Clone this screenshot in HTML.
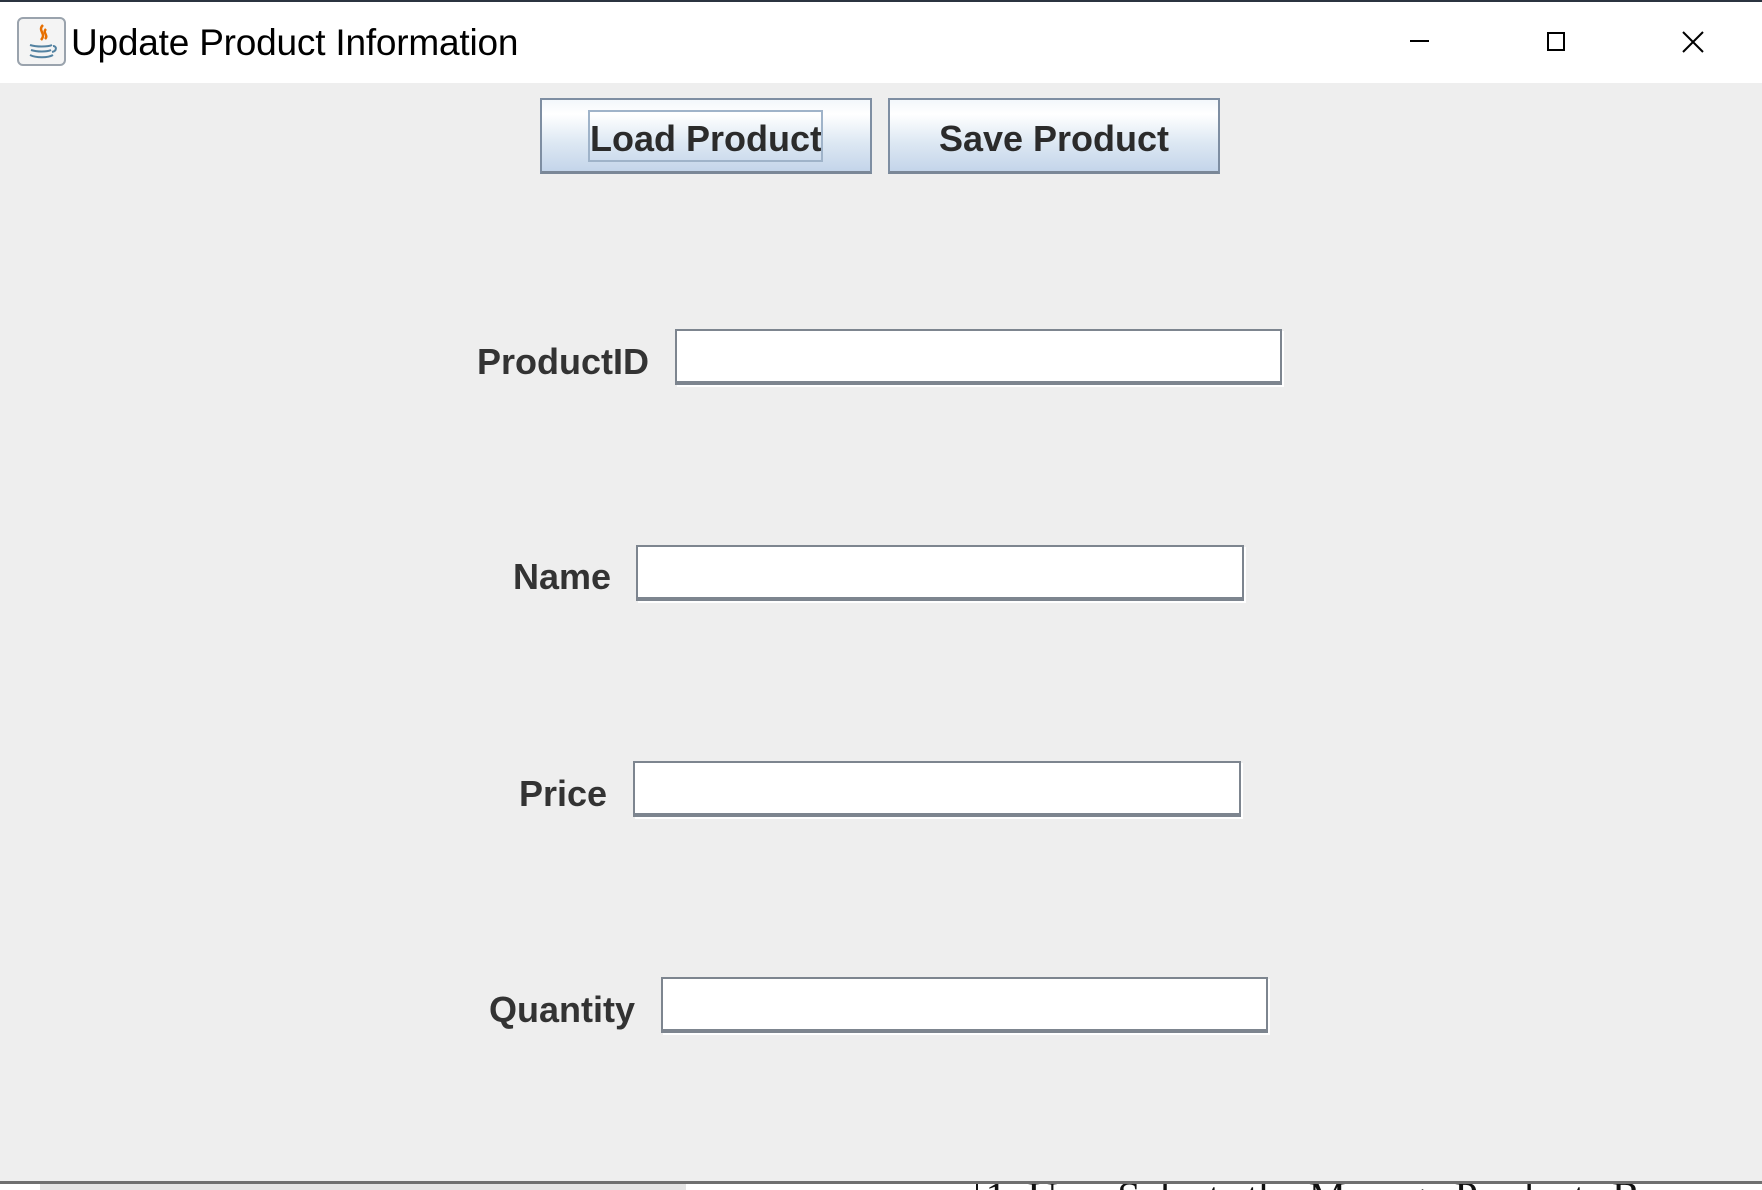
<!DOCTYPE html>
<html><head><meta charset="utf-8"><style>
*{margin:0;padding:0;box-sizing:border-box}
html{width:1762px;height:1190px;overflow:hidden}
body{width:1762px;height:1190px;overflow:hidden;background:#fff;position:relative;font-family:"Liberation Sans",sans-serif}
.top{position:absolute;left:0;top:0;width:1762px;height:2px;background:#2b3440}
.title{position:absolute;left:0;top:2px;width:1762px;height:81px;background:#fff}
.ttext{position:absolute;left:71px;top:20px;font-size:37px;color:#000;letter-spacing:-0.2px;white-space:nowrap}
.content{position:absolute;left:0;top:83px;width:1762px;height:1098px;background:#eeeeee}
.btn{position:absolute;top:98px;width:332px;height:76px;border:2px solid #7e8ea2;border-bottom:3px solid #7a8797;background:linear-gradient(#f3f7fb 0%,#ffffff 20%,#dde8f3 60%,#c4d5ea 100%);font-weight:bold;font-size:36px;color:#2b2b2b;text-align:center;line-height:78px;white-space:nowrap}
.focus{position:absolute;left:588px;top:110px;width:235px;height:52px;border:2px solid #9fb3c9}
.lbl{position:absolute;font-weight:bold;font-size:36px;color:#333;white-space:nowrap;line-height:42px}
.fld{position:absolute;background:#fff;border-top:2px solid #7d858f;border-left:2px solid #7d858f;border-right:2px solid #7d858f;border-bottom:4px solid #7d858f;box-shadow:2px 2px 0 #fff}
.bot{position:absolute;left:0;top:1181px;width:1762px;height:3px;background:#6f6f6f}
.botgray{position:absolute;left:40px;top:1184px;width:646px;height:6px;background:#e4e4e4}
.botwrap{position:absolute;left:975px;top:1184px;width:787px;height:6px;overflow:hidden}
.bottxt{position:absolute;left:0;top:-10px;font-family:"Liberation Serif",serif;font-size:42px;color:#111;white-space:nowrap}
</style></head><body>
<div class="top"></div>
<div class="title">
  <svg style="position:absolute;left:17px;top:15px" width="50" height="50" viewBox="0 0 50 50">
    <rect x="1" y="1" width="47" height="47" rx="5" fill="#f4f4f4" stroke="#9aa3ad" stroke-width="2"/>
    <path d="M26 8c-6 6 4 8-2 15M29 12c-4 4 3 6-1 10" stroke="#e76f00" stroke-width="2.5" fill="none"/>
    <path d="M13 28c6 2 18 2 22 0M14 33c6 2 16 2 20 0M13 38c6 3 18 3 23 0M36 29c4 0 4 5-1 6" stroke="#5382a1" stroke-width="2" fill="none"/>
  </svg>
  <div class="ttext">Update Product Information</div>
  <div style="position:absolute;left:1410px;top:38px;width:19px;height:2px;background:#000"></div>
  <div style="position:absolute;left:1547px;top:30px;width:18px;height:19px;border:2px solid #000"></div>
  <svg style="position:absolute;left:1682px;top:29px" width="22" height="22" viewBox="0 0 22 22"><path d="M1 1L21 21M21 1L1 21" stroke="#000" stroke-width="2"/></svg>
</div>
<div class="content"></div>
<div class="btn" style="left:540px">Load Product</div>
<div class="focus"></div>
<div class="btn" style="left:888px">Save Product</div>

<div class="lbl" style="left:477px;top:341px">ProductID</div>
<div class="fld" style="left:675px;top:329px;width:607px;height:56px"></div>
<div class="lbl" style="left:513px;top:556px">Name</div>
<div class="fld" style="left:636px;top:545px;width:608px;height:56px"></div>
<div class="lbl" style="left:519px;top:773px">Price</div>
<div class="fld" style="left:633px;top:761px;width:608px;height:56px"></div>
<div class="lbl" style="left:489px;top:989px">Quantity</div>
<div class="fld" style="left:661px;top:977px;width:607px;height:56px"></div>

<div class="bot"></div>
<div class="botgray"></div>
<div style="position:absolute;left:976px;top:1184px;width:2px;height:6px;background:#111"></div>
<div class="botwrap"><div class="bottxt">&nbsp;1. User Selects the Manage Products Bu</div></div>
</body></html>
